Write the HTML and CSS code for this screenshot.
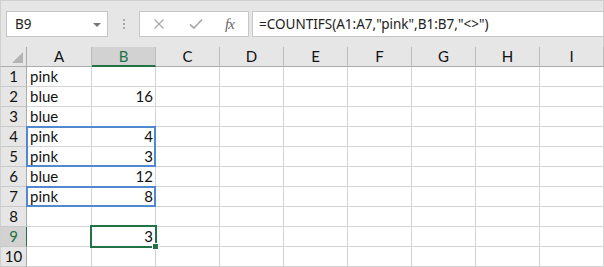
FILE: index.html
```html
<!DOCTYPE html>
<html lang="en">

<head>
    <meta charset="UTF-8">
    <title>COUNTIFS</title>
    <link rel="stylesheet" href="styles.css">
</head>

<body>
    <div class="app">
        <!-- 名称框 + 编辑栏 -->
        <div class="topbar">
            <div class="namebox">
                <span>B9</span>
                <i class="caret"></i>
            </div>
            <div class="grip"><i></i><i></i><i></i></div>
            <div class="fbtns">
                <svg class="ico" width="12" height="12" viewBox="0 0 12 12">
                    <path d="M1.5 1.5 L10.5 10.5 M10.5 1.5 L1.5 10.5" stroke="#ababab" stroke-width="1.3" fill="none"/>
                </svg>
                <svg class="ico" width="14" height="12" viewBox="0 0 14 12">
                    <path d="M1 6.5 L5 10 L13 1.5" stroke="#ababab" stroke-width="1.8" fill="none"/>
                </svg>
                <span class="fx">fx</span>
            </div>
            <div class="finput">=COUNTIFS(A1:A7,"pink",B1:B7,"&lt;&gt;")</div>
        </div>

        <!-- 表格 -->
        <div class="sheet">
            <div class="hd corner"><i class="tri"></i></div>
            <div class="hd">A</div>
            <div class="hd sel">B</div>
            <div class="hd">C</div>
            <div class="hd">D</div>
            <div class="hd">E</div>
            <div class="hd">F</div>
            <div class="hd">G</div>
            <div class="hd">H</div>
            <div class="hd">I</div>

            <div class="rh">1</div><div class="c">pink</div><div class="c num"></div><div class="c"></div><div class="c"></div><div class="c"></div><div class="c"></div><div class="c"></div><div class="c"></div><div class="c"></div>
            <div class="rh">2</div><div class="c">blue</div><div class="c num">16</div><div class="c"></div><div class="c"></div><div class="c"></div><div class="c"></div><div class="c"></div><div class="c"></div><div class="c"></div>
            <div class="rh">3</div><div class="c">blue</div><div class="c num"></div><div class="c"></div><div class="c"></div><div class="c"></div><div class="c"></div><div class="c"></div><div class="c"></div><div class="c"></div>
            <div class="rh">4</div><div class="c">pink</div><div class="c num">4</div><div class="c"></div><div class="c"></div><div class="c"></div><div class="c"></div><div class="c"></div><div class="c"></div><div class="c"></div>
            <div class="rh">5</div><div class="c">pink</div><div class="c num">3</div><div class="c"></div><div class="c"></div><div class="c"></div><div class="c"></div><div class="c"></div><div class="c"></div><div class="c"></div>
            <div class="rh">6</div><div class="c">blue</div><div class="c num">12</div><div class="c"></div><div class="c"></div><div class="c"></div><div class="c"></div><div class="c"></div><div class="c"></div><div class="c"></div>
            <div class="rh">7</div><div class="c">pink</div><div class="c num">8</div><div class="c"></div><div class="c"></div><div class="c"></div><div class="c"></div><div class="c"></div><div class="c"></div><div class="c"></div>
            <div class="rh">8</div><div class="c"></div><div class="c num"></div><div class="c"></div><div class="c"></div><div class="c"></div><div class="c"></div><div class="c"></div><div class="c"></div><div class="c"></div>
            <div class="rh sel">9</div><div class="c"></div><div class="c num">3</div><div class="c"></div><div class="c"></div><div class="c"></div><div class="c"></div><div class="c"></div><div class="c"></div><div class="c"></div>
            <div class="rh">10</div><div class="c"></div><div class="c num"></div><div class="c"></div><div class="c"></div><div class="c"></div><div class="c"></div><div class="c"></div><div class="c"></div><div class="c"></div>

            <!-- 引用区域 和 当前单元格 -->
            <div class="ref ref-1"></div>
            <div class="ref ref-2"></div>
            <div class="active"></div>
            <div class="handle"></div>
        </div>
    </div>
</body>

</html>
```

FILE: styles.css
```css
* {
    margin: 0;
    padding: 0;
    box-sizing: border-box;
}

body {
    width: 604px;
    height: 267px;
    overflow: hidden;
    background: #fff;
    font-family: "Lato", "Liberation Sans", sans-serif;
}

.app {
    width: 604px;
    height: 267px;
    display: flex;
    flex-direction: column;
}

/* 顶部编辑栏 */
.topbar {
    height: 47px;
    background: #e6e6e6;
    border: 1px solid #d0d0d0;
    border-bottom: none;
    display: flex;
    align-items: flex-start;
    padding: 10px 0 0 5px;
}

.namebox {
    width: 102px;
    height: 26px;
    background: #fff;
    border: 1px solid #c6c6c6;
    display: flex;
    align-items: center;
    justify-content: space-between;
    padding: 0 6px 0 8px;
    font-family: "Noto Sans", "Open Sans", sans-serif;
    font-size: 13.5px;
    color: #222;
}

.caret {
    width: 0;
    height: 0;
    border-left: 4px solid transparent;
    border-right: 4px solid transparent;
    border-top: 4px solid #777;
    margin-top: 1px;
}

.grip {
    width: 31px;
    height: 26px;
    display: flex;
    flex-direction: column;
    align-items: center;
    justify-content: center;
    gap: 2px;
}

.grip i {
    width: 2px;
    height: 2px;
    background: #a8a8a8;
}

.fbtns {
    width: 110px;
    height: 26px;
    background: #fff;
    border: 1px solid #c6c6c6;
    display: flex;
    align-items: center;
    padding: 0 0 0 13px;
    gap: 24px;
}

.fbtns .ico {
    display: block;
}

.fx {
    font-family: "Liberation Serif", serif;
    font-style: italic;
    font-size: 15px;
    color: #666;
    margin-left: -2px;
    letter-spacing: -1px;
}

.finput {
    flex: 1;
    height: 26px;
    margin-left: 3px;
    background: #fff;
    border: 1px solid #c6c6c6;
    border-right: none;
    padding: 0 0 0 6px;
    line-height: 24px;
    font-family: "Noto Sans", "Open Sans", sans-serif;
    font-size: 13.5px;
    color: #222;
    white-space: nowrap;
}

/* 单元格区域 */
.sheet {
    position: relative;
    display: grid;
    grid-template-columns: 27px 65px repeat(8, 64px);
    grid-template-rows: repeat(11, 20px);
    font-size: 15px;
    color: #111;
}

.hd,
.rh,
.c {
    border-right: 1px solid #d4d4d4;
    border-bottom: 1px solid #d4d4d4;
    line-height: 19px;
    white-space: nowrap;
}

.hd {
    background: #e6e6e6;
    border-right-color: #bcbcbc;
    border-bottom-color: #ababab;
    text-align: center;
}

.hd.sel {
    background: #d2d2d2;
    color: #217346;
    border-bottom: 2px solid #217346;
}

.corner {
    position: relative;
    border-left: 1px solid #d0d0d0;
    border-right-color: #ababab;
}

.tri {
    position: absolute;
    right: 3px;
    bottom: 3px;
    width: 0;
    height: 0;
    border-left: 11px solid transparent;
    border-bottom: 11px solid #b4b4b4;
}

.rh {
    background: #e6e6e6;
    border-left: 1px solid #d0d0d0;
    border-right-color: #ababab;
    border-bottom-color: #c8c8c8;
    text-align: center;
}

.rh.sel {
    background: #d2d2d2;
    color: #217346;
    border-right-color: #217346;
}

.c {
    padding: 0 3px;
}

.c.num {
    text-align: right;
    padding-right: 2px;
}

.ref {
    position: absolute;
    left: 26px;
    width: 130px;
    border: 2px solid #5089d0;
}

.ref-1 {
    top: 79px;
    height: 41px;
}

.ref-2 {
    top: 139px;
    height: 21px;
}

.active {
    position: absolute;
    left: 90px;
    top: 178px;
    width: 67px;
    height: 23px;
    border: 2px solid #217346;
}

.handle {
    position: absolute;
    left: 152px;
    top: 196px;
    width: 7px;
    height: 7px;
    background: #217346;
    border: 1px solid #fff;
}
```
